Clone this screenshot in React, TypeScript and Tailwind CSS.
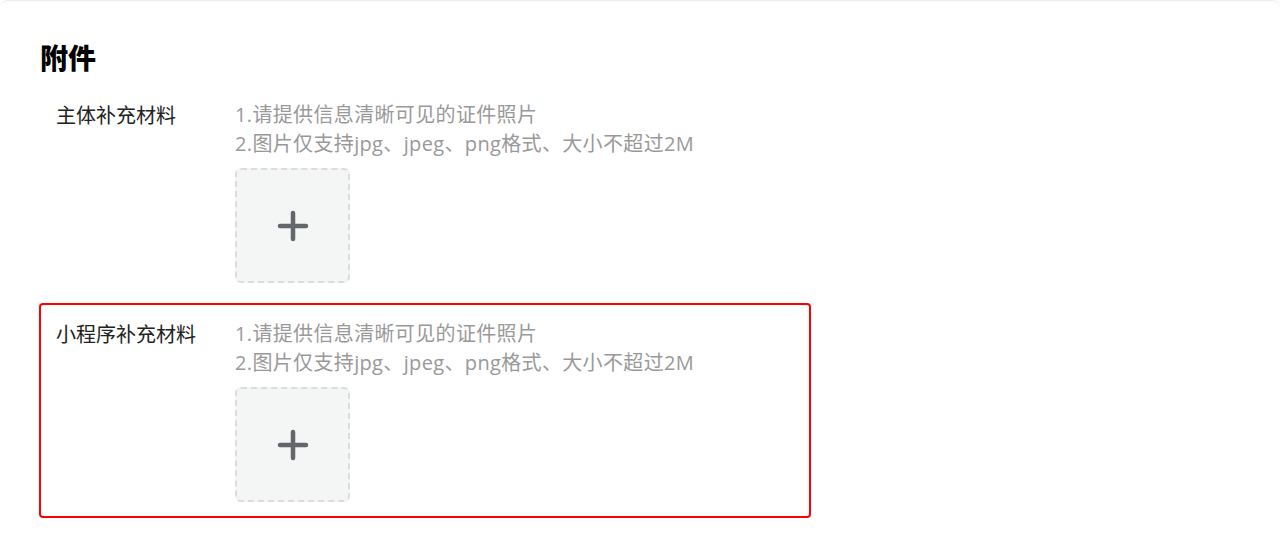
import React from "react";

const hints = ["1.请提供信息清晰可见的证件照片", "2.图片仅支持jpg、jpeg、png格式、大小不超过2M"];

const PlusIcon = () => (
  <svg width="32" height="32" viewBox="0 0 32 32" fill="none">
    <path d="M16 3v26M3 16h26" stroke="#63666a" strokeWidth="4.5" strokeLinecap="round" />
  </svg>
);

const Section: React.FC<{ label: string; active?: boolean }> = ({ label, active }) => (
  <div
    className={`w-[772px] flex border-2 rounded-[4px] pt-[14px] pb-[14px] pl-[15px] ${
      active ? "border-[#ff0000]" : "border-transparent"
    }`}
  >
    <div className="w-[179px] shrink-0 text-[20px] leading-[29px] text-[#222]">{label}</div>
    <div className="flex flex-col">
      {hints.map((h) => (
        <p
          key={h}
          className="text-[20px] leading-[29px] tracking-[0.35px] text-[#999]"
          style={{ fontFamily: '"Open Sans", "Noto Sans CJK SC", sans-serif' }}
        >
          {h}
        </p>
      ))}
      <button className="mt-[10px] w-[115px] h-[115px] flex items-center justify-center bg-[#f4f5f5] border-2 border-dashed border-[#dcdcdc] rounded-[6px]">
        <PlusIcon />
      </button>
    </div>
  </div>
);

export default function App() {
  return (
    <div
      className="min-h-[549px] bg-white"
      style={{ fontFamily: '"Noto Sans CJK SC", "Noto Sans", sans-serif' }}
    >
      <div className="border-t border-[#ececec] rounded-t-lg px-[39px] pt-[36px] pb-8">
        <h1 className="text-[28px] leading-[40px] font-black text-black pl-[1px]">附件</h1>
        <div className="mt-[7px] flex flex-col gap-[4px]">
          <Section label="主体补充材料" />
          <Section label="小程序补充材料" active />
        </div>
      </div>
    </div>
  );
}
